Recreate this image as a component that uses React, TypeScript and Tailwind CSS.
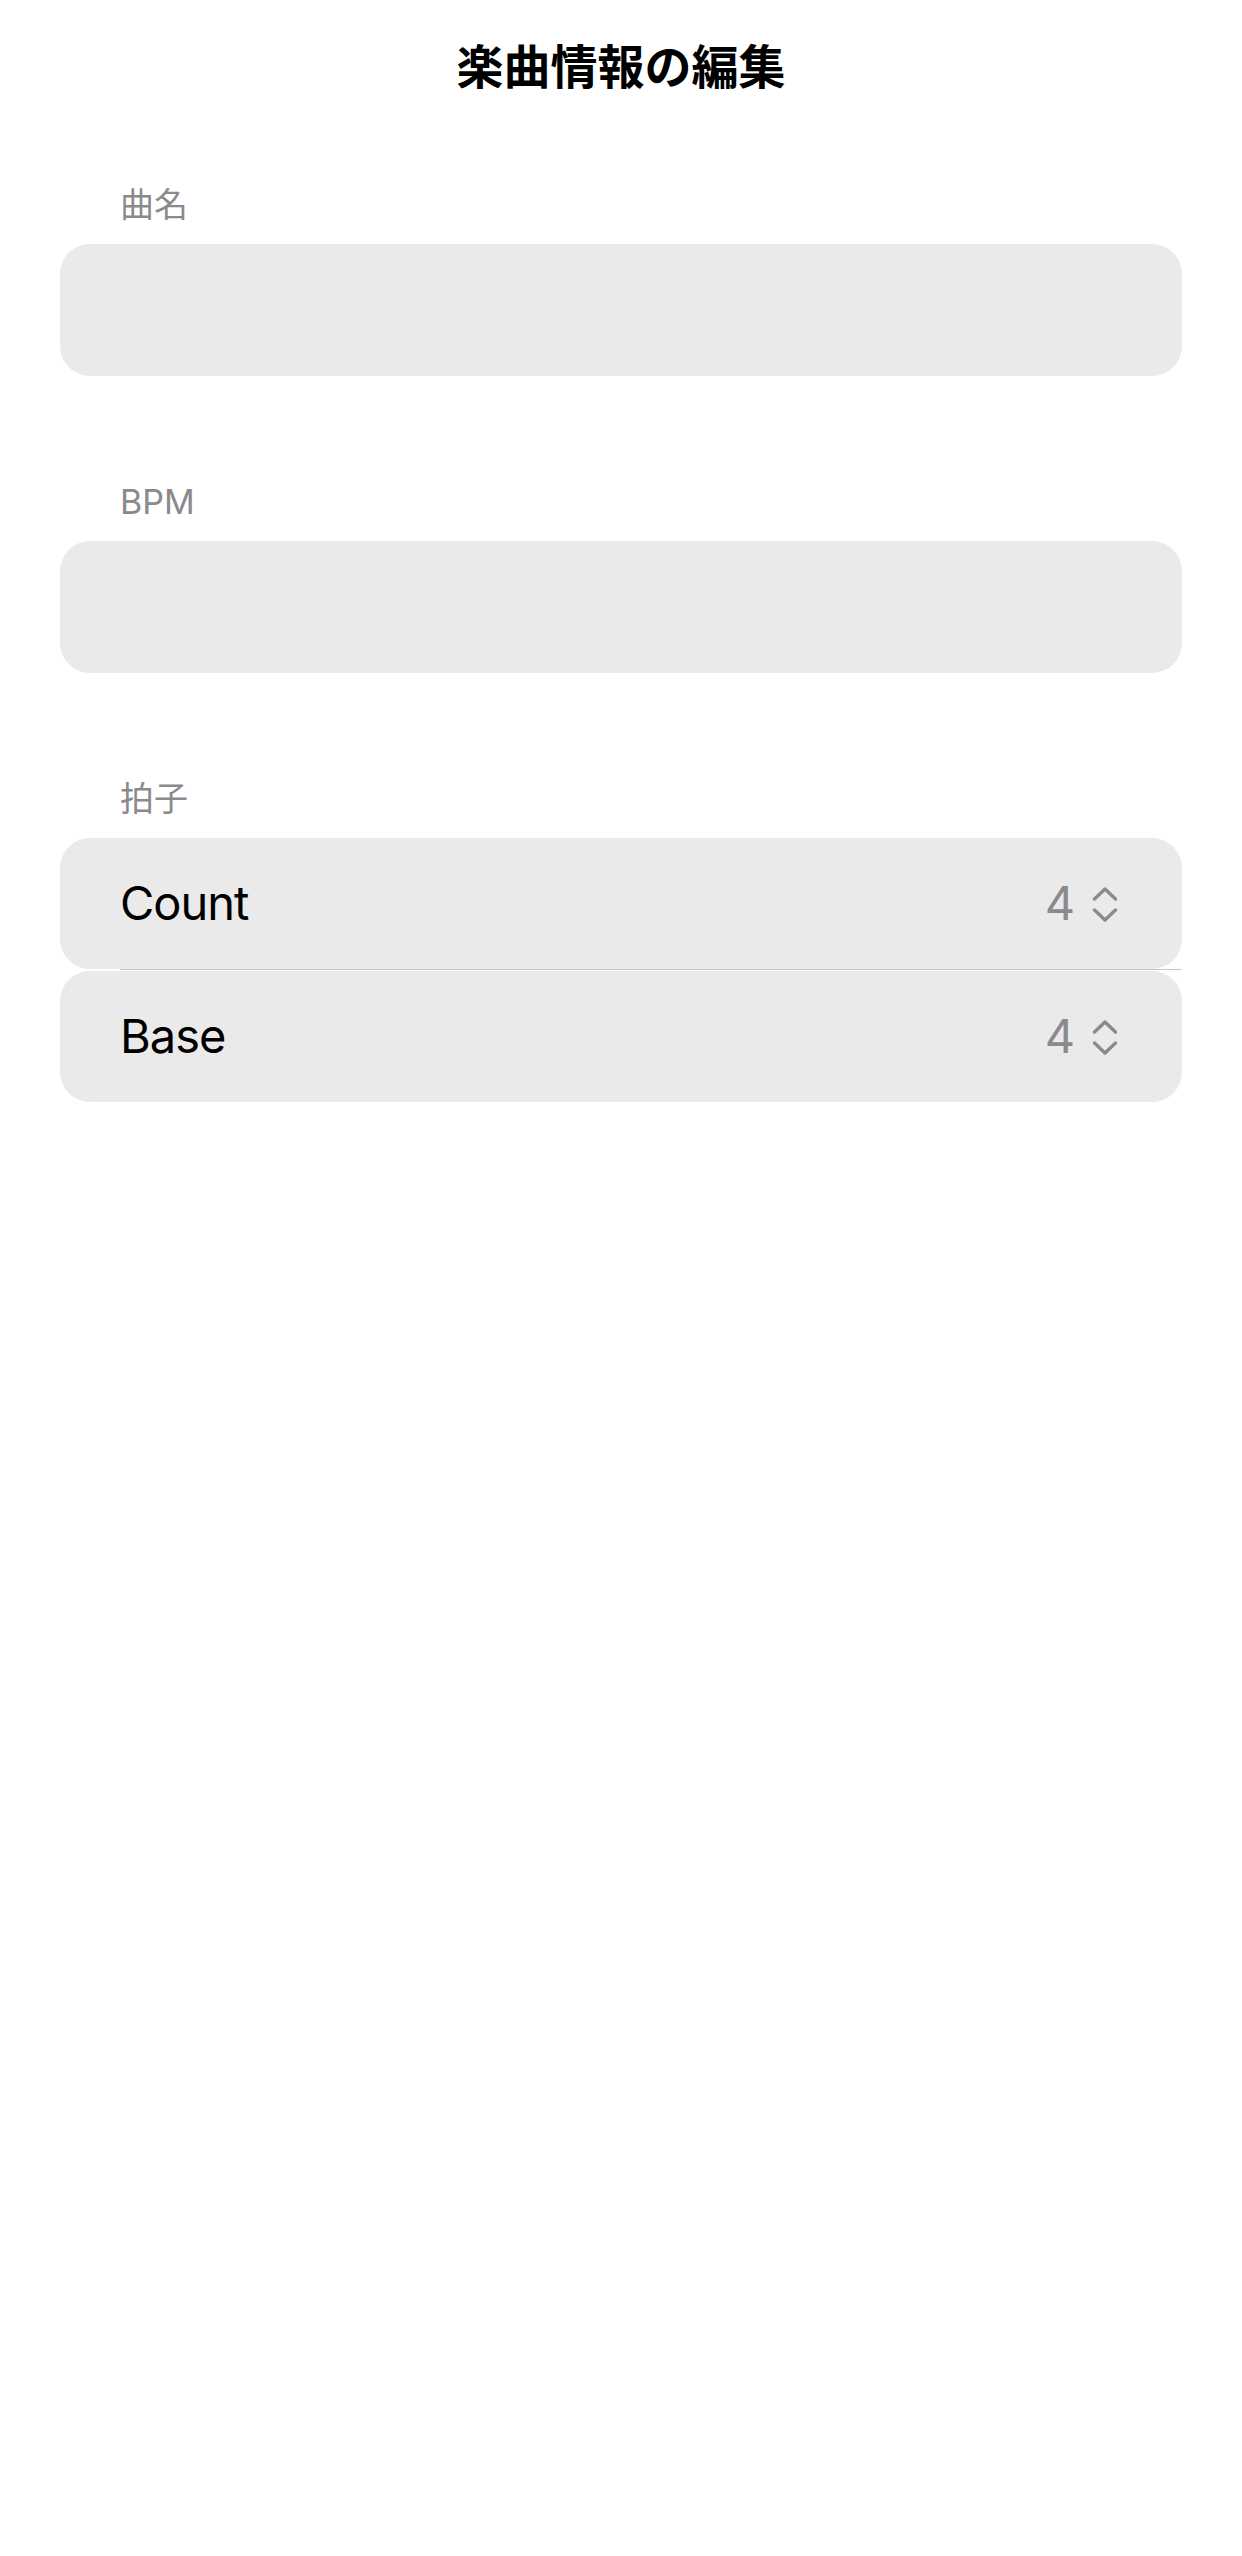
import type { ReactNode } from 'react'

function Updown() {
  return (
    <svg width="28" height="38" viewBox="0 0 28 38" fill="none" stroke="#8a8a8e" strokeWidth="3.4" strokeLinecap="round" strokeLinejoin="round">
      <path d="M3.5 14 L14 4 L24.5 14" />
      <path d="M3.5 25 L14 35 L24.5 25" />
    </svg>
  )
}

function Section({ label, first, children }: { label: string; first?: boolean; children: ReactNode }) {
  return (
    <section className={first ? 'mt-[51px]' : 'mt-[106px]'}>
      <div className="h-[40px] leading-[40px] text-[34px] text-[#8a8a8e] pl-[60px] mb-[19px]">{label}</div>
      {children}
    </section>
  )
}

function PickerRow({ label, value }: { label: string; value: string }) {
  return (
    <div className="h-[131px] rounded-[30px] bg-[#eaeaea] flex items-center justify-between pl-[60px] pr-[63px]">
      <span className="text-[47px] tracking-[-1px]">{label}</span>
      <span className="flex items-center gap-[16px]">
        <span className="text-[47px] text-[#8a8a8e]">{value}</span>
        <Updown />
      </span>
    </div>
  )
}

export default function App() {
  return (
    <div className="min-h-[2556px] bg-white text-black font-['Inter','Noto_Sans_CJK_JP',sans-serif]">
      <h1 className="h-[134px] flex items-center justify-center text-[47px] font-bold">楽曲情報の編集</h1>

      <div className="px-[60px]">
        <Section label="曲名" first>
          <div className="h-[132px] rounded-[30px] bg-[#eaeaea]" />
        </Section>

        <Section label="BPM">
          <div className="h-[132px] rounded-[30px] bg-[#eaeaea]" />
        </Section>

        <Section label="拍子">
          <PickerRow label="Count" value="4" />
          <div className="h-[2px] ml-[60px] border-t border-[#c6c6c8]" />
          <PickerRow label="Base" value="4" />
        </Section>
      </div>
    </div>
  )
}
